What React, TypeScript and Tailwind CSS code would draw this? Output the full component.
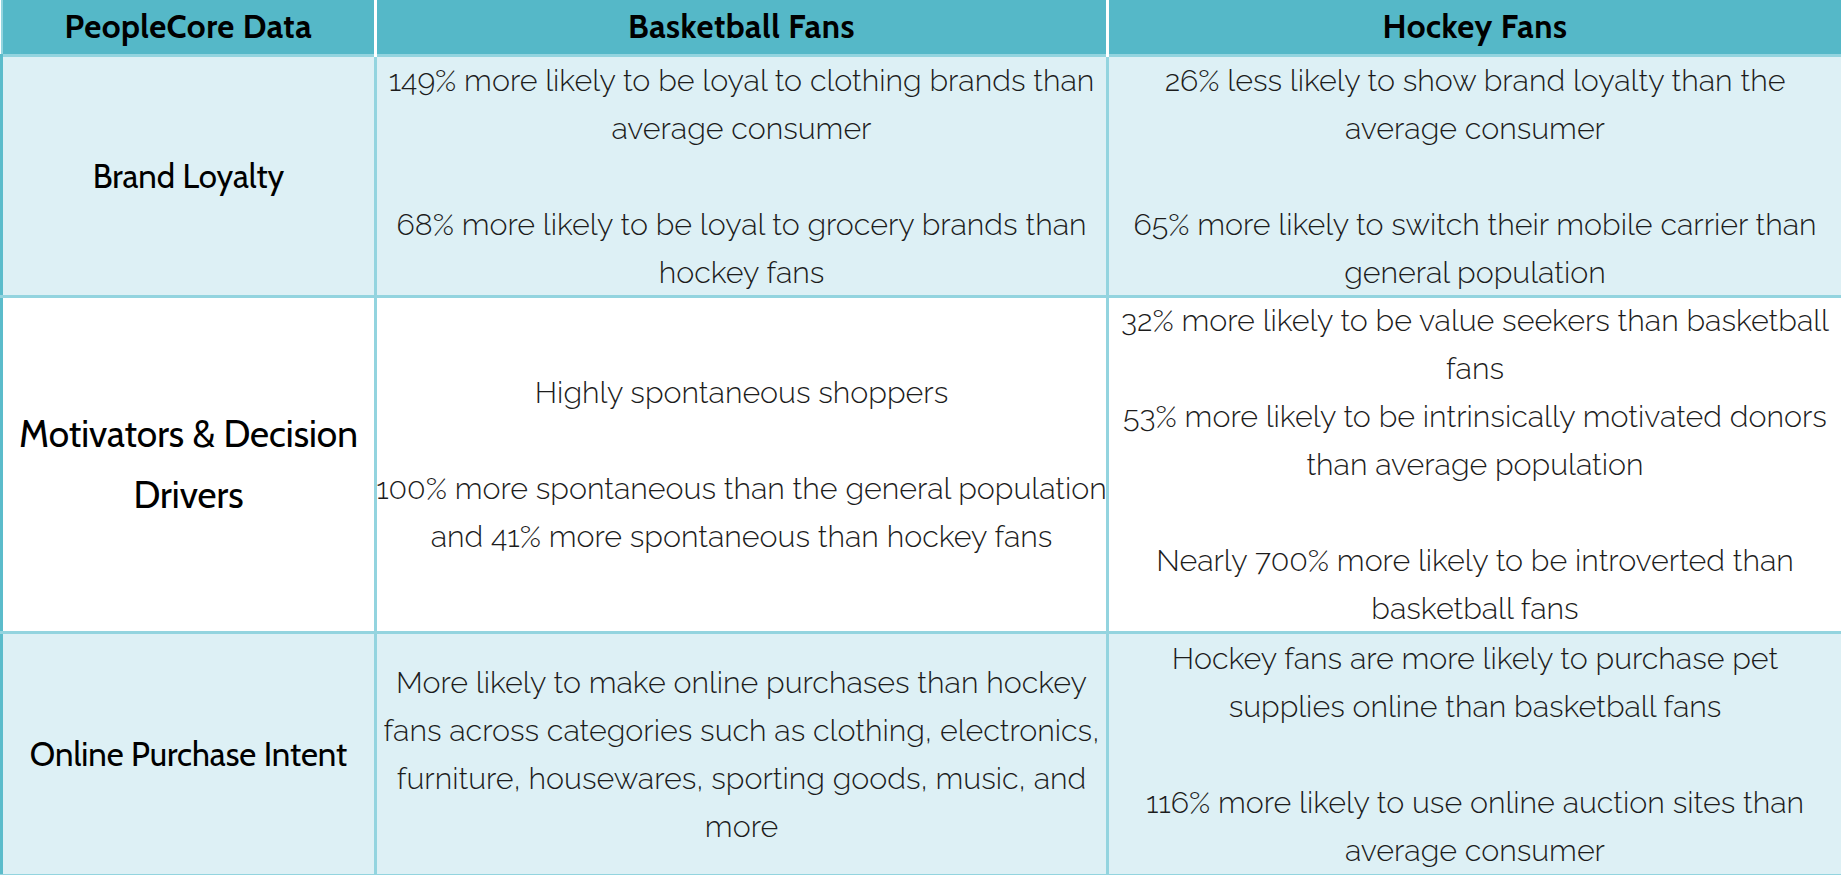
const body = "font-['Raleway','Lato',sans-serif] font-light text-[30.4px] leading-[48px] text-[#1c1c1c]"
const label = "font-['Cabin','Lato',sans-serif] font-normal text-black"

type Row = {
  label: string
  labelClass: string
  bg: string
  basketball: string[]
  hockey: string[]
  height: string
}

const rows: Row[] = [
  {
    label: 'Brand Loyalty',
    labelClass: 'text-[33px] leading-[40px]',
    bg: 'bg-[#ddf0f5]',
    height: 'h-[241px]',
    basketball: [
      '149% more likely to be loyal to clothing brands than',
      'average consumer',
      '',
      '68% more likely to be loyal to grocery brands than',
      'hockey fans',
    ],
    hockey: [
      '26% less likely to show brand loyalty than the',
      'average consumer',
      '',
      '65% more likely to switch their mobile carrier than',
      'general population',
    ],
  },
  {
    label: 'Motivators & Decision Drivers',
    labelClass: 'text-[37px] leading-[61px] px-1',
    bg: 'bg-white',
    height: 'h-[336px]',
    basketball: [
      'Highly spontaneous shoppers',
      '',
      '100% more spontaneous than the general population',
      'and 41% more spontaneous than hockey fans',
    ],
    hockey: [
      '32% more likely to be value seekers than basketball',
      'fans',
      '53% more likely to be intrinsically motivated donors',
      'than average population',
      '',
      'Nearly 700% more likely to be introverted than',
      'basketball fans',
    ],
  },
  {
    label: 'Online Purchase Intent',
    labelClass: 'text-[33px] leading-[40px]',
    bg: 'bg-[#ddf0f5]',
    height: 'h-[243px]',
    basketball: [
      'More likely to make online purchases than hockey',
      'fans across categories such as clothing, electronics,',
      'furniture, housewares, sporting goods, music, and',
      'more',
    ],
    hockey: [
      'Hockey fans are more likely to purchase pet',
      'supplies online than basketball fans',
      '',
      '116% more likely to use online auction sites than',
      'average consumer',
    ],
  },
]

function Lines({ lines }: { lines: string[] }) {
  return (
    <div className="flex flex-col items-center -my-[4px]">
      {lines.map((l, i) => (
        <div key={i} className="whitespace-nowrap h-[48px]">
          {l}
        </div>
      ))}
    </div>
  )
}

export default function App() {
  const head = "font-['Cabin','Lato',sans-serif] font-bold text-[33px] tracking-[0.5px] text-black"
  return (
    <div className="w-[1841px] h-[875px] bg-white overflow-hidden">
      <table className="w-[1841px] border-collapse table-fixed border-l-2 border-r-[3px] border-b-[3px] border-[#93d4df]">
        <colgroup>
          <col className="w-[374px]" />
          <col className="w-[732px]" />
          <col className="w-[735px]" />
        </colgroup>
        <thead>
          <tr className="h-[55px] bg-[#55b8c8]">
            <th className={`border-r-[3px] border-white ${head}`}>PeopleCore Data</th>
            <th className={`border-r-[3px] border-white ${head}`}>Basketball Fans</th>
            <th className={head}>Hockey Fans</th>
          </tr>
        </thead>
        <tbody>
          {rows.map((r) => (
            <tr key={r.label} className={`${r.bg} ${r.height}`}>
              <td className={`border-[3px] border-[#93d4df] border-l-[#5bbccb] text-center align-middle ${label} ${r.labelClass}`}>
                {r.label}
              </td>
              <td className={`border-[3px] border-[#93d4df] text-center align-middle p-0 ${body}`}>
                <Lines lines={r.basketball} />
              </td>
              <td className={`border-[3px] border-[#93d4df] text-center align-middle p-0 ${body}`}>
                <Lines lines={r.hockey} />
              </td>
            </tr>
          ))}
        </tbody>
      </table>
    </div>
  )
}
